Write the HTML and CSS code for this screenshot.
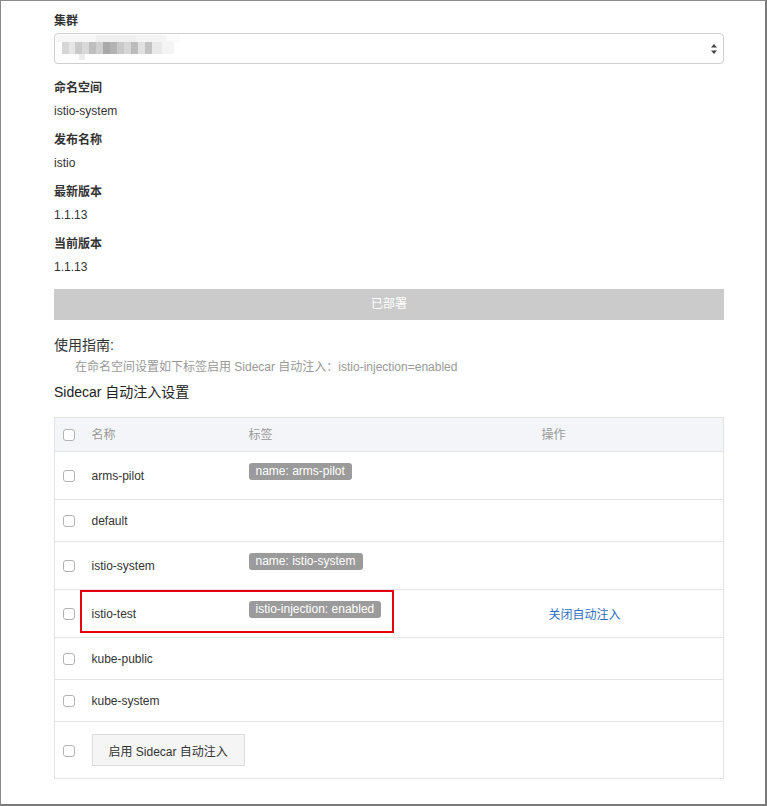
FILE: index.html
```html
<!DOCTYPE html>
<html lang="zh-CN">
<head>
<meta charset="utf-8">
<title>Istio</title>
<link rel="stylesheet" href="styles.css">
</head>
<body>
<div class="frame">
  <div class="content">
    <div class="label">集群</div>
    <div class="select">
      <div class="mosaic">
        <div class="m-top"></div>
        <div class="m-mid"></div>
        <div class="m-bot"></div>
      </div>
      <svg class="arrows" width="6" height="10" viewBox="0 0 6 10"><path d="M3 0 L6 3.5 L0 3.5 Z M0 6.5 L6 6.5 L3 10 Z" fill="#444"/></svg>
    </div>
    <div class="label">命名空间</div>
    <div class="value">istio-system</div>
    <div class="label">发布名称</div>
    <div class="value">istio</div>
    <div class="label">最新版本</div>
    <div class="value">1.1.13</div>
    <div class="label">当前版本</div>
    <div class="value">1.1.13</div>
    <div class="deployed">已部署</div>
    <div class="guide-title">使用指南:</div>
    <div class="guide-text">在命名空间设置如下标签启用 Sidecar 自动注入：istio-injection=enabled</div>
    <div class="section-title">Sidecar 自动注入设置</div>
    <div class="table-wrap">
      <table class="ns-table">
        <colgroup>
          <col class="c-check"><col class="c-name"><col class="c-tag"><col class="c-op">
        </colgroup>
        <thead>
          <tr class="head-row">
            <th class="cell-check"><span class="checkbox"></span></th>
            <th>名称</th>
            <th>标签</th>
            <th>操作</th>
          </tr>
        </thead>
        <tbody>
          <tr class="row-tall">
            <td class="cell-check"><span class="checkbox"></span></td>
            <td>arms-pilot</td>
            <td class="cell-tag"><span class="tag">name: arms-pilot</span></td>
            <td></td>
          </tr>
          <tr class="row-short">
            <td class="cell-check"><span class="checkbox"></span></td>
            <td>default</td>
            <td></td>
            <td></td>
          </tr>
          <tr class="row-tall">
            <td class="cell-check"><span class="checkbox"></span></td>
            <td>istio-system</td>
            <td class="cell-tag"><span class="tag">name: istio-system</span></td>
            <td></td>
          </tr>
          <tr class="row-tall">
            <td class="cell-check"><span class="checkbox"></span></td>
            <td>istio-test</td>
            <td class="cell-tag"><span class="tag">istio-injection: enabled</span></td>
            <td class="cell-op"><a class="op-link" href="#">关闭自动注入</a></td>
          </tr>
          <tr class="row-short">
            <td class="cell-check"><span class="checkbox"></span></td>
            <td>kube-public</td>
            <td></td>
            <td></td>
          </tr>
          <tr class="row-short">
            <td class="cell-check"><span class="checkbox"></span></td>
            <td>kube-system</td>
            <td></td>
            <td></td>
          </tr>
          <tr class="row-foot">
            <td class="cell-check"><span class="checkbox"></span></td>
            <td colspan="3"><button class="enable-btn" type="button">启用 Sidecar 自动注入</button></td>
          </tr>
        </tbody>
      </table>
      <div class="highlight"></div>
    </div>
  </div>
</div>
</body>
</html>
```
FILE: styles.css
```css
* { box-sizing: border-box; }
html, body { margin: 0; padding: 0; background: #fff; }
body {
  font-family: "Liberation Sans", "Noto Sans CJK SC", sans-serif;
  font-size: 12px;
  color: #333;
}
.frame {
  width: 767px;
  height: 806px;
  border-top: 1px solid #8a8a8a;
  border-left: 1px solid #8a8a8a;
  border-right: 2px solid #7a7a7a;
  border-bottom: 2px solid #7a7a7a;
  overflow: hidden;
}
.content {
  padding: 12px 41px 0 53px;
}
.label {
  font-weight: bold;
  line-height: 17px;
  margin-bottom: 6px;
}
.value {
  line-height: 17px;
  margin-bottom: 12px;
}
.select {
  margin: -3px 0 16px;
  height: 31px;
  border: 1px solid #cfcfcf;
  border-radius: 4px;
  display: flex;
  align-items: center;
  justify-content: space-between;
  padding: 0 6px 0 1px;
  position: relative;
}
.mosaic {
  width: 124px;
  height: 28px;
  display: flex;
  flex-direction: column;
}
.m-top {
  height: 7px;
  width: 124px;
  background: linear-gradient(to right, #f6f6f6 0 40px, #efefef 40px 80px, #f4f4f4 80px 110px, #fafafa 110px 124px);
}
.m-mid {
  margin-left: 6px;
  height: 12px;
  width: 112px;
  background: linear-gradient(to right,
    #d6d6d6 0 7px, #e6e6e6 7px 13px, #cacaca 13px 20px, #d9d9d9 20px 27px,
    #bebebe 27px 34px, #cfcfcf 34px 41px, #a9a9a9 41px 48px, #b3b3b3 48px 55px,
    #c9c9c9 55px 62px, #d6d6d6 62px 69px, #bcbcbc 69px 76px, #e1e1e1 76px 83px,
    #c2c2c2 83px 90px, #e9e9e9 90px 100px, #f4f4f4 100px 112px);
}
.m-bot {
  margin-left: 23px;
  height: 6px;
  width: 6px;
  background: #ececec;
}
.arrows { display: block; }
.deployed {
  margin-top: 13px;
  height: 31px;
  line-height: 31px;
  background: #cbcbcb;
  color: #fff;
  text-align: center;
}
.guide-title {
  margin-top: 15px;
  font-size: 14px;
  line-height: 20px;
  color: #333;
}
.guide-text {
  margin-top: 4px;
  padding-left: 21px;
  line-height: 17px;
  color: #999;
}
.section-title {
  margin-top: 6px;
  font-size: 14px;
  line-height: 20px;
  color: #222;
}
.table-wrap {
  margin-top: 15px;
  position: relative;
  width: 670px;
}
.ns-table {
  width: 670px;
  border-collapse: collapse;
  table-layout: fixed;
  border: 1px solid #e3e3e3;
}
.c-check { width: 37px; }
.c-name { width: 157px; }
.c-tag { width: 293px; }
.c-op { width: auto; }
.ns-table th, .ns-table td {
  padding: 0;
  text-align: left;
  vertical-align: middle;
  border-bottom: 1px solid #e3e3e3;
}
.ns-table th {
  font-weight: normal;
  color: #999;
  background: #f4f5f8;
  padding-bottom: 2px;
}
.ns-table th.cell-check { padding-bottom: 0; }
.cell-check { padding-left: 8px !important; }
.head-row { height: 34px; }
.row-tall { height: 48px; }
.row-short { height: 42px; }
.row-foot { height: 57px; }
.checkbox {
  display: inline-block;
  width: 12px;
  height: 12px;
  border: 1px solid #b3b3b3;
  border-radius: 3px;
  background: #fff;
  vertical-align: middle;
}
.ns-table td.cell-tag {
  vertical-align: top;
  padding-top: 11px;
}
.tag {
  display: inline-block;
  background: #9b9b9b;
  color: #fff;
  border-radius: 3px;
  padding: 0 7px;
  line-height: 17px;
  height: 17px;
}
.cell-op { padding-left: 7px !important; }
.op-link {
  color: #2f6fc4;
  text-decoration: none;
}
.enable-btn {
  font-family: inherit;
  font-size: 12px;
  color: #333;
  background: #f5f5f5;
  border: 1px solid #dcdcdc;
  height: 32px;
  padding: 0 16px;
  border-radius: 0;
}
.highlight {
  position: absolute;
  left: 26px;
  top: 173px;
  width: 314px;
  height: 43px;
  border: 2px solid #e8000b;
}
```
